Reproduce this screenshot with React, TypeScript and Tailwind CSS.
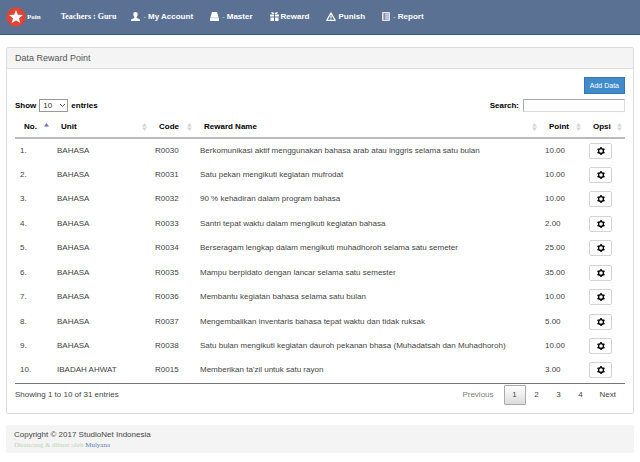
import React, { useState } from 'react';

type Reward = {
  unit: string;
  code: string;
  name: string;
  point: string;
};

const rewards: Reward[] = [
  { unit: 'BAHASA', code: 'R0030', name: 'Berkomunikasi aktif menggunakan bahasa arab atau inggris selama satu bulan', point: '10.00' },
  { unit: 'BAHASA', code: 'R0031', name: 'Satu pekan mengikuti kegiatan mufrodat', point: '10.00' },
  { unit: 'BAHASA', code: 'R0032', name: '90 % kehadiran dalam program bahasa', point: '10.00' },
  { unit: 'BAHASA', code: 'R0033', name: 'Santri tepat waktu dalam mengikuti kegiatan bahasa', point: '2.00' },
  { unit: 'BAHASA', code: 'R0034', name: 'Berseragam lengkap dalam mengikuti muhadhoroh selama satu semeter', point: '25.00' },
  { unit: 'BAHASA', code: 'R0035', name: 'Mampu berpidato dengan lancar selama satu semester', point: '35.00' },
  { unit: 'BAHASA', code: 'R0036', name: 'Membantu kegiatan bahasa selama satu bulan', point: '10.00' },
  { unit: 'BAHASA', code: 'R0037', name: 'Mengembalikan inventaris bahasa tepat waktu dan tidak ruksak', point: '5.00' },
  { unit: 'BAHASA', code: 'R0038', name: 'Satu bulan mengikuti kegiatan dauroh pekanan bhasa (Muhadatsah dan Muhadhoroh)', point: '10.00' },
  { unit: 'IBADAH AHWAT', code: 'R0015', name: "Memberikan ta'zil untuk satu rayon", point: '3.00' },
];

const columns = [
  { label: 'No.', width: 'w-[37px]' },
  { label: 'Unit', width: 'w-[98px]' },
  { label: 'Code', width: 'w-[45px]' },
  { label: 'Reward Name', width: 'w-auto' },
  { label: 'Point', width: 'w-[44px]' },
  { label: 'Opsi', width: 'w-[41px]' },
];

const UserIcon = () => (
  <svg viewBox="0 0 9 9" className="size-[9px]" fill="currentColor">
    <path d="M4.500 0C3 0 2.300.9 2.300 2.300c0 1.200.5 2.100 1.100 2.700v.9L.8 6.900C.2 7.200 0 7.600 0 8.200V9h9v-.8c0-.6-.2-1-.8-1.300L5.600 5.900V5c.6-.6 1.100-1.500 1.100-2.700C6.700.9 6 0 4.500 0z" />
  </svg>
);

const DriveIcon = () => (
  <svg viewBox="0 0 9 9" className="size-[9px]" fill="currentColor">
    <path d="M2 0h5l1.700 5.700H.3z" />
    <path d="M0 6.100h9V9H0z" />
  </svg>
);

const GiftIcon = () => (
  <svg viewBox="0 0 9 9" className="size-[9px]" fill="currentColor">
    <path d="M0 2.500h4v2H0zM5 2.500h4v2H5zM.5 5.500H4V9H.5zM5 5.500h3.500V9H5z" />
    <path d="M1 .2h2.200L4.300 2H2.200zM8 .2H5.800L4.700 2h2.100z" />
  </svg>
);

const WarningIcon = () => (
  <svg viewBox="0 0 10 9" className="h-[9px] w-2.5">
    <path d="M5 1L9.200 8.300H.8z" fill="none" stroke="currentColor" strokeWidth="1.300" strokeLinejoin="round" />
    <path d="M4.400 3.500h1.200v2.400H4.400zM4.400 6.500h1.200v1H4.400z" fill="currentColor" />
  </svg>
);

const ReportIcon = () => (
  <svg viewBox="0 0 8 9" className="h-[9px] w-2">
    <path d="M.5.5h7v8h-7z" fill="#b4b8ca" stroke="#e3e6ee" />
    <path d="M2.500 1v7" stroke="#8490ac" />
    <path d="M4 2.500h2.500M4 4.500h2.500M4 6.500h2.500" stroke="#c9cddb" />
  </svg>
);

const GearIcon = () => (
  <svg viewBox="0 0 16 16" className="size-2" fill="none" stroke="currentColor">
    <circle cx="8" cy="8" r="4.900" strokeWidth="2.600" />
    <path d="M8 0v3M8 13v3M1.100 4l2.600 1.500M12.300 10.500l2.600 1.500M1.100 12l2.600-1.500M12.300 5.500L14.900 4" strokeWidth="3" />
  </svg>
);

const SortIcon: React.FC<{ active?: boolean }> = ({ active }) => (
  <svg viewBox="0 0 5 8" className="h-2 w-[5px] shrink-0">
    <path d="M0 3.500L2.500 0 5 3.500z" fill={active ? '#6a70d8' : '#d6d6d6'} />
    {!active && <path d="M0 4.500L2.500 8 5 4.500z" fill="#d6d6d6" />}
  </svg>
);

const menu = [
  { label: 'My Account', icon: <UserIcon />, dropdown: true },
  { label: 'Master', icon: <DriveIcon />, dropdown: true },
  { label: 'Reward', icon: <GiftIcon />, dropdown: false },
  { label: 'Punish', icon: <WarningIcon />, dropdown: false },
  { label: 'Report', icon: <ReportIcon />, dropdown: true },
];

const Navbar = () => (
  <nav className="flex h-[35px] items-center border-b border-[#2f5b90] bg-[#5a7193] px-1.5 pb-px text-white">
    <a href="#" className="flex items-center gap-px font-['Liberation_Serif',serif] text-[7px] font-bold">
      <svg viewBox="0 0 20 20" className="size-5">
        <circle cx="10" cy="10" r="9.700" fill="#df4434" />
        <path d="M10 3l1.900 4.700 5 .3-3.900 3.200 1.300 4.900L10 13.400l-4.300 2.700L7 11.200 3.100 8l5-.3z" fill="#fff" />
      </svg>
      Poin
    </a>
    <span className="ml-5 font-['Liberation_Serif',serif] text-[8px] font-bold">Teachers : Guru</span>
    <ul className="ml-[15px] flex items-center gap-[17px] text-[8px] font-bold">
      {menu.map((item) => (
        <li key={item.label}>
          <a href="#" className="flex items-center gap-0.5">
            {item.icon}
            {item.dropdown && <span className="pl-px font-normal text-[#c0c8d6]">-</span>}
            {item.label}
          </a>
        </li>
      ))}
    </ul>
  </nav>
);

const RewardTable = () => (
  <table className="w-full table-fixed border-b border-[#777] text-left">
    <thead>
      <tr className="h-6 border-b-2 border-[#bbb] text-black">
        {columns.map((col, i) => (
          <th key={col.label} className={`${col.width} p-0 pt-0.5 pr-[3px] pl-[9px] font-bold`}>
            <div className="flex items-center justify-between">
              {col.label}
              <SortIcon active={i === 0} />
            </div>
          </th>
        ))}
      </tr>
    </thead>
    <tbody>
      {rewards.map((reward, i) => (
        <tr key={reward.code} className="odd:h-6 even:h-[25px]">
          <td className="p-0 pl-[5px]">{i + 1}.</td>
          <td className="p-0 pl-[5px]">{reward.unit}</td>
          <td className="p-0 pl-[5px]">{reward.code}</td>
          <td className="p-0 pl-[5px] whitespace-nowrap">{reward.name}</td>
          <td className="p-0 pl-[5px]">{reward.point}</td>
          <td className="p-0 pl-[5px]">
            <button
              type="button"
              aria-label={`Opsi ${reward.code}`}
              className="flex h-4 w-[23px] items-center justify-center rounded-xs border border-[#d4d4d4] bg-white text-black"
            >
              <GearIcon />
            </button>
          </td>
        </tr>
      ))}
    </tbody>
  </table>
);

const Pagination = () => {
  const [page, setPage] = useState<number>(1);

  return (
    <div className="flex items-center">
      <button type="button" disabled={page === 1} className="px-2.5 text-[#7d7d7d]" onClick={() => setPage(page - 1)}>
        Previous
      </button>
      {[1, 2, 3, 4].map((n) => (
        <button
          key={n}
          type="button"
          onClick={() => setPage(n)}
          className={
            n === page
              ? 'h-5 w-[22px] rounded-[1px] border border-[#aaa] bg-linear-to-b from-white to-[#dcdcdc]'
              : 'h-5 w-[22px]'
          }
        >
          {n}
        </button>
      ))}
      <button type="button" disabled={page === 4} className="pr-[9px] pl-2" onClick={() => setPage(page + 1)}>
        Next
      </button>
    </div>
  );
};

const App: React.FC = () => {
  const [search, setSearch] = useState<string>('');

  return (
    <div className="bg-white font-['Liberation_Sans',Arial,sans-serif] text-[8px] leading-3 text-[#444]">
      <Navbar />

      <main className="mx-1.5 mt-3 rounded-xs border border-[#ddd]">
        <h1 className="border-b border-[#ddd] bg-[#f4f4f4] px-2 py-1 text-[9px] text-[#555]">Data Reward Point</h1>

        <div className="p-2">
          <div className="flex justify-end">
            <button type="button" className="h-[17px] border border-[#3577b5] bg-[#428bca] px-[5px] text-[7px] text-white">
              Add Data
            </button>
          </div>

          {/* Table controls */}
          <div className="mt-[5px] mb-0.5 flex items-center justify-between font-bold text-black">
            <label className="flex items-center gap-[3px]">
              Show
              <span className="relative flex items-center">
                <select className="h-[13px] w-[29px] appearance-none border border-[#999] bg-white pl-[3px] text-[8px] leading-2 font-normal text-[#333]">
                  <option>10</option>
                  <option>25</option>
                  <option>50</option>
                </select>
                <svg viewBox="0 0 5 3" className="pointer-events-none absolute right-[3px] h-[3px] w-[5px]">
                  <path d="M0 0l2.500 2.500L5 0" fill="none" stroke="#555" />
                </svg>
              </span>
              entries
            </label>
            <label className="flex items-center gap-1">
              Search:
              <input
                type="text"
                value={search}
                onChange={(e) => setSearch(e.target.value)}
                className="h-[13px] w-[102px] border border-[#ddd] border-t-[#aaa] border-l-[#aaa] px-1 font-normal"
              />
            </label>
          </div>

          <RewardTable />

          <div className="flex items-center justify-between pt-px">
            <p>Showing 1 to 10 of 31 entries</p>
            <Pagination />
          </div>
        </div>
      </main>

      <footer className="mx-1.5 mt-[11px] rounded-xs bg-[#f4f4f4] px-2 py-1">
        <p>Copyright © 2017 StudioNet Indonesia</p>
        <p className="font-['Liberation_Serif',serif] text-[7px] leading-2 text-[#b9d6b5]">
          Dirancang &amp; dibuat oleh{' '}
          <a href="#" className="text-[#5a7fc0]">
            Mulyana
          </a>
        </p>
      </footer>
    </div>
  );
};

export default App;
